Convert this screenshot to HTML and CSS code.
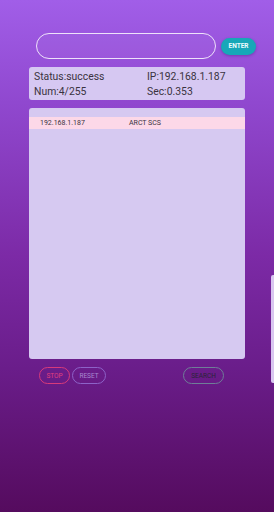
FILE: index.html
```html
<!DOCTYPE html>
<html lang="en">
<head>
  <meta charset="UTF-8">
  <meta name="viewport" content="width=device-width, initial-scale=1.0">
  <title>IP Scanner</title>
  <link rel="stylesheet" href="styles.css">
</head>
<body>
  <div class="screen">
    <div class="top-row">
      <input type="text" class="ip-input">
      <button class="enter-btn">ENTER</button>
    </div>

    <div class="status-box">
      <span>Status:success</span>
      <span>IP:192.168.1.187</span>
      <span>Num:4/255</span>
      <span>Sec:0.353</span>
    </div>

    <div class="result-list">
      <div class="result-row">
        <span class="col-ip">192.168.1.187</span>
        <span class="col-name">ARCT SCS</span>
      </div>
    </div>

    <div class="actions">
      <button class="pill stop">STOP</button>
      <button class="pill reset">RESET</button>
      <span class="spacer"></span>
      <button class="pill search">SEARCH</button>
    </div>
  </div>
  <div class="edge-handle"></div>
</body>
</html>
```

FILE: styles.css
```css
* {
  box-sizing: border-box;
}
html, body {
  height: 100%;
}
body {
  margin: 0;
  padding: 0;
  font-family: Roboto, 'Liberation Sans', sans-serif;
  color: #333;
  background: linear-gradient(to bottom, #a15ee8 0%, #9048cf 20%, #7c2aa6 50%, #6a1d8a 72%, #550b5e 100%);
  overflow: hidden;
  position: relative;
}
.screen {
  padding: 33px 29px 0 29px;
}
.top-row {
  display: flex;
  align-items: center;
  padding-left: 7px;
  margin-right: -12px;
  gap: 5px;
}
.ip-input {
  width: 180px;
  min-width: 0;
  flex-shrink: 0;
  height: 26px;
  border: 1.5px solid #eee2fa;
  border-radius: 13px;
  background: rgba(255,255,255,0.04);
  outline: none;
  padding: 0 10px;
}
.enter-btn {
  width: 35px;
  min-width: 35px;
  flex-shrink: 0;
  height: 17px;
  padding: 0;
  border: none;
  border-radius: 9px;
  background: #17a8b8;
  color: #eafcff;
  font-family: Roboto, 'Liberation Sans', sans-serif;
  font-size: 6.5px;
  font-weight: bold;
  box-shadow: 0 1px 3px rgba(40,0,80,0.3);
}
.status-box {
  margin-top: 8px;
  height: 33px;
  background: #d6c8f2;
  border-radius: 3px;
  display: grid;
  grid-template-columns: 113px 1fr;
  padding: 2px 5px;
  font-size: 10.4px;
  line-height: 15px;
  color: #3a3340;
}
.result-list {
  margin-top: 8px;
  height: 251px;
  background: #d6c9f1;
  border-radius: 3px;
  padding-top: 9px;
}
.result-row {
  display: flex;
  height: 12px;
  align-items: center;
  background: #fcd8e8;
  font-size: 7px;
  color: #3b3340;
}
.col-ip {
  width: 100px;
  padding-left: 11px;
}
.actions {
  display: flex;
  align-items: center;
  margin-top: 8px;
  padding-left: 10px;
  padding-right: 21px;
  gap: 2px;
}
.spacer {
  flex: 1;
}
.pill {
  height: 17px;
  padding: 0;
  background: transparent;
  border-radius: 9px;
  font-family: Roboto, 'Liberation Sans', sans-serif;
  font-size: 6.5px;
  border: 1px solid;
}
.stop {
  width: 31px;
  border-color: #d83a7a;
  color: #e0407e;
}
.reset {
  width: 34px;
  border-color: #8d62c8;
  color: #a888d0;
}
.search {
  width: 41px;
  border-color: #6f7d98;
  color: #2a2438;
}
.edge-handle {
  position: absolute;
  right: 0;
  top: 275px;
  width: 3px;
  height: 108px;
  background: #d9c6f0;
  border-radius: 2px 0 0 2px;
}
```
